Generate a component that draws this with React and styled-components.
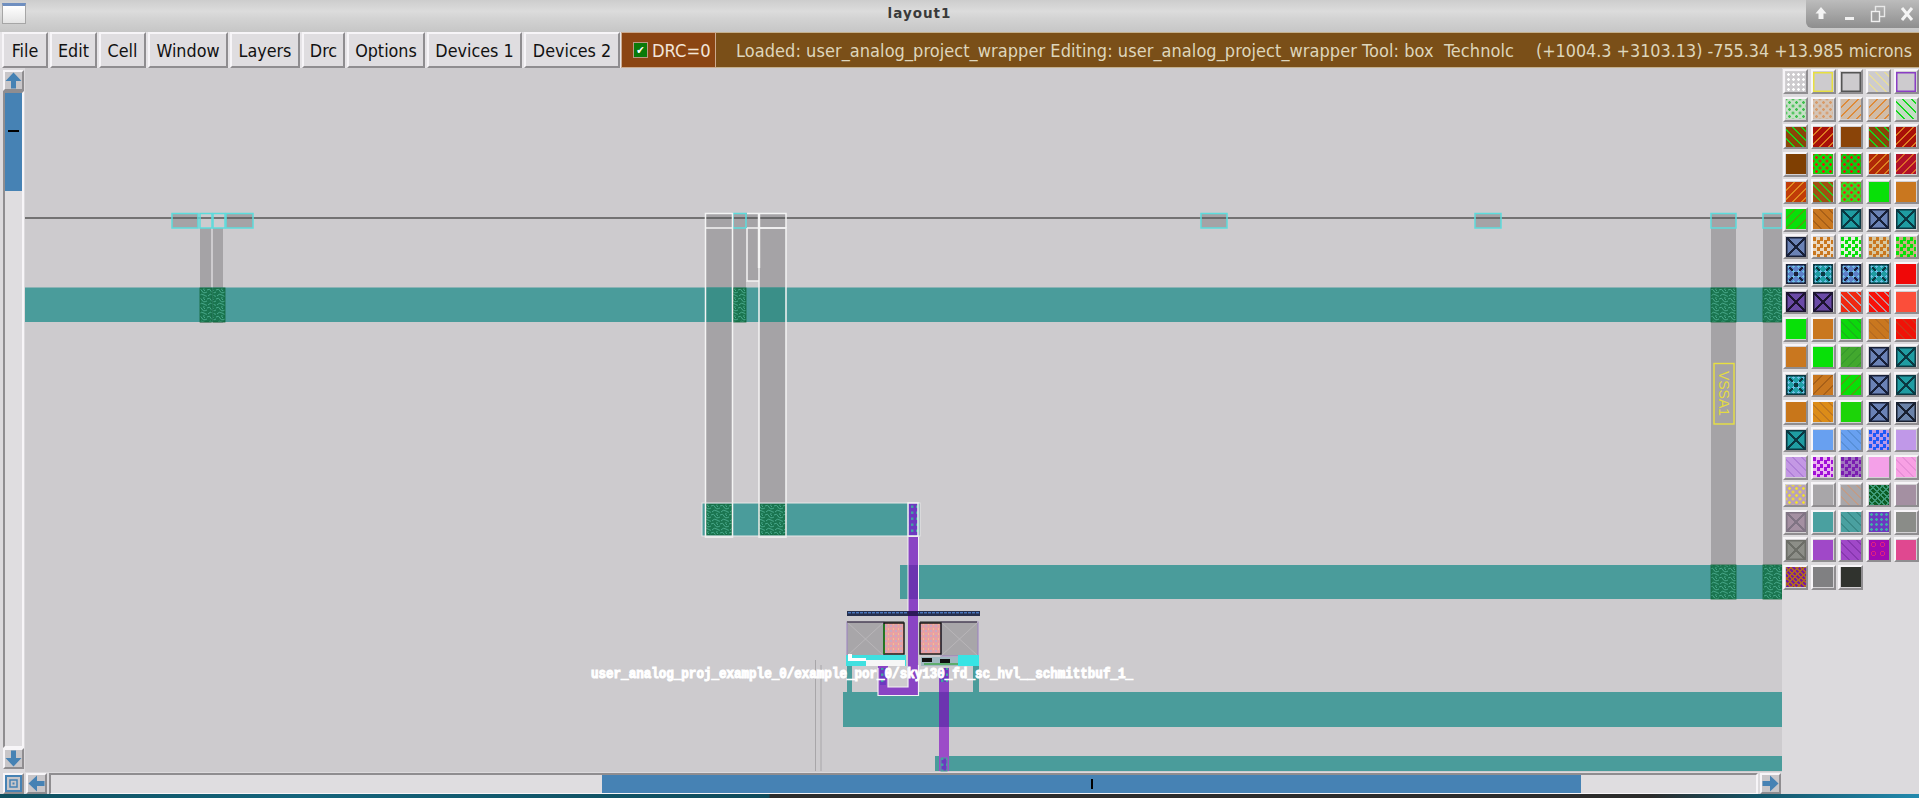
import React from "react";
import styled, { createGlobalStyle } from "styled-components";

const GlobalStyle = createGlobalStyle`
  html, body {
    margin: 0;
    padding: 0;
    background: #dcdadd;
    overflow: hidden;
  }
`;

const BLUE = "#4682b4";
const TEAL = "#4a9c9b";
const bevel = `
  border-style: solid;
  border-width: 2px;
  border-color: #f7f5f8 #8f8d90 #8f8d90 #f7f5f8;
  box-sizing: border-box;
`;

const Page = styled.div`
  display: flex;
  flex-direction: column;
  width: 1919px;
  height: 798px;
  overflow: hidden;
  background: #dcdadd;
  font-family: "DejaVu Sans", "Liberation Sans", sans-serif;
`;

/* window manager title */
const TitleBar = styled.div`
  position: relative;
  display: flex;
  align-items: flex-start;
  justify-content: center;
  flex: none;
  height: 32px;
  padding-right: 80px;
  background: linear-gradient(#cdcdcd, #dcdcdc 35%, #d2d2d2 60%, #c6c6c6);
`;

const TitleText = styled.span`
  margin-top: 5px;
  font-size: 13.5px;
  font-weight: bold;
  letter-spacing: 1px;
  color: #3a3a3a;
`;

const WindowIcon = styled.div`
  position: absolute;
  left: 2px;
  top: 3px;
  width: 24px;
  height: 21px;
  box-sizing: border-box;
  border: 1px solid #a6a6a6;
  border-top: 3px solid #6f8fc0;
  background: linear-gradient(#ffffff, #e4e4e4);
`;

const WindowControls = styled.div`
  position: absolute;
  right: 0;
  top: 0;
  display: flex;
  align-items: center;
  justify-content: flex-end;
  gap: 14px;
  width: 113px;
  height: 28px;
  padding-right: 5px;
  box-sizing: border-box;
  border-bottom-left-radius: 6px;
  background: linear-gradient(#bcbcbc, #8e8e8e);
`;

const Toolbar = styled.div`
  display: flex;
  flex: none;
  height: 36px;
  padding-left: 2px;
  gap: 2px;
  background: #e6e4e7;
`;

const MenuButton = styled.div`
  ${bevel}
  display: flex;
  align-items: center;
  justify-content: center;
  flex: none;
  width: ${(p) => p.$width}px;
  height: 36px;
  background: #dfdde0;
  color: #111;
  font-size: 17.8px;
  font-stretch: condensed;
  white-space: nowrap;
`;

const DrcBox = styled.div`
  display: flex;
  align-items: center;
  flex: none;
  gap: 4px;
  width: 95px;
  height: 36px;
  margin-left: -1px;
  padding-left: 11px;
  box-sizing: border-box;
  border: 1px solid #caa98e;
  background: #8b4513;
  color: #f2e6da;
  font-size: 18.2px;
  font-stretch: condensed;
`;

const DrcCheck = styled.span`
  display: flex;
  align-items: center;
  justify-content: center;
  width: 13px;
  height: 14px;
  border: 1px solid #b89a82;
  background: #0a7a0a;
  color: #fff;
  font-size: 11px;
  line-height: 1;
`;

const StatusBar = styled.div`
  display: flex;
  flex: 1;
  align-items: center;
  justify-content: space-between;
  height: 36px;
  margin-left: -2px;
  padding: 0 7px 0 20px;
  box-sizing: border-box;
  border-top: 1px solid #c4b08e;
  border-bottom: 1px solid #c4b08e;
  background: #7a4f18;
  color: #ded6bc;
  font-size: 18px;
  font-stretch: condensed;
  white-space: pre;
`;

const StatusMessage = styled.span`
  letter-spacing: 0.055px;
`;

const StatusCoords = styled.span`
  font-size: 17.8px;
`;

const Workspace = styled.div`
  display: grid;
  flex: none;
  grid-template-columns: 25px 1757px 137px;
  grid-template-rows: 704px 22px;
  height: 726px;
`;

const VerticalBar = styled.div`
  grid-column: 1;
  grid-row: 1;
  display: flex;
  flex-direction: column;
  padding: 2px 1px 3px 3px;
  box-sizing: border-box;
  background: #dcdadd;
`;

const ArrowButton = styled.div`
  ${bevel}
  display: flex;
  align-items: center;
  justify-content: center;
  flex: none;
  width: 21px;
  height: 21px;
  background: #c8c6c9;
`;

const VerticalTrough = styled.div`
  ${bevel}
  flex: 1;
  border-color: #8f8d90 #f7f5f8 #f7f5f8 #8f8d90;
  background: #dfdde0;
`;

const VerticalThumb = styled.div`
  display: flex;
  align-items: center;
  justify-content: center;
  height: 98px;
  padding-bottom: 22px;
  box-sizing: border-box;
  background: ${BLUE};
  &::after {
    content: "";
    width: 11px;
    height: 2px;
    background: #000;
  }
`;

const Canvas = styled.svg`
  grid-column: 2;
  grid-row: 1;
  display: block;
  width: 1757px;
  height: 704px;
  background: #cdcbce;
`;

const Palette = styled.div`
  grid-column: 3;
  grid-row: 1 / span 2;
  display: grid;
  grid-template-columns: repeat(5, 25px);
  grid-auto-rows: 25px;
  column-gap: 2.7px;
  row-gap: 2.55px;
  align-content: start;
  padding: 1px 0 0 1px;
  background: #dcdadd;
`;

const PaletteCell = styled.div`
  ${bevel}
  display: flex;
  align-items: center;
  justify-content: center;
  background: #d2d0d3;
`;

const stripes = (deg, ink, gap = 5) =>
  `repeating-linear-gradient(${deg}deg, transparent 0 ${gap}px, ${ink} ${gap}px ${gap + 1.4}px)`;

const overlayFor = (kind, ink) => {
  switch (kind) {
    case "back":
      return `background-image: ${stripes(45, ink)};`;
    case "slash":
      return `background-image: ${stripes(135, ink)};`;
    case "dense":
      return `background-image: ${stripes(45, ink, 2.2)}, ${stripes(135, ink, 3.2)};`;
    case "grid":
      return `
        background-image: linear-gradient(${ink}, ${ink});
        background-size: 2px 2px;
        background-image: radial-gradient(${ink} 1.2px, transparent 1.5px);
        background-size: 5px 5px;
      `;
    case "dots":
      return `
        background-image: linear-gradient(${ink}, ${ink}), linear-gradient(${ink}, ${ink});
        background-size: 2px 2px;
        background-repeat: no-repeat;
        background-image: radial-gradient(${ink} 1.2px, transparent 1.5px), radial-gradient(${ink} 1.2px, transparent 1.5px);
        background-size: 7px 7px;
        background-repeat: repeat;
        background-position: 0 0, 3.5px 3.5px;
      `;
    case "dashes":
      return `background-image: ${stripes(135, ink, 6)};`;
    case "brick":
      return `
        background-image: linear-gradient(${ink}, ${ink}), linear-gradient(${ink}, ${ink});
        background-size: 3px 3px;
        background-repeat: no-repeat;
        background-image:
          repeating-conic-gradient(${ink} 0 25%, transparent 0 50%);
        background-size: 7px 7px;
        background-repeat: repeat;
      `;
    case "rings":
      return `background-image: radial-gradient(transparent 1.5px, ${ink} 1.6px, ${ink} 2.6px, transparent 2.7px); background-size: 9px 9px;`;
    case "swirl":
      return `background-image: ${stripes(45, ink, 2.5)}, ${stripes(135, ink, 4)};`;
    case "cross":
    case "crossDots":
      return `
        box-shadow: inset 0 0 0 1.5px ${ink};
        background-image:
          ${kind === "crossDots" ? `radial-gradient(#6fc0e8 1px, transparent 1.3px),` : ""}
          linear-gradient(45deg, transparent calc(50% - 1px), ${ink} calc(50% - 1px), ${ink} calc(50% + 1px), transparent calc(50% + 1px)),
          linear-gradient(135deg, transparent calc(50% - 1px), ${ink} calc(50% - 1px), ${ink} calc(50% + 1px), transparent calc(50% + 1px));
        ${kind === "crossDots" ? "background-size: 5px 5px, 100% 100%, 100% 100%;" : ""}
      `;
    case "outline":
      return `box-shadow: inset 0 0 0 1.5px ${ink};`;
    default:
      return "";
  }
};

const Swatch = styled.div`
  width: 20px;
  height: 20px;
  background-color: ${(p) => p.$fill};
  ${(p) => overlayFor(p.$kind, p.$ink)}
`;

const HorizontalBar = styled.div`
  grid-column: 1 / span 2;
  grid-row: 2;
  display: flex;
  align-items: center;
  gap: 2px;
  padding: 1px 1px 0 3px;
  box-sizing: border-box;
  background: #dcdadd;
`;

const HorizontalTrough = styled.div`
  ${bevel}
  display: flex;
  flex: 1;
  height: 22px;
  padding-left: 551px;
  border-color: #8f8d90 #f7f5f8 #f7f5f8 #8f8d90;
  background: #dfdde0;
`;

const HorizontalThumb = styled.div`
  display: flex;
  align-items: center;
  justify-content: center;
  width: 979px;
  background: ${BLUE};
  &::after {
    content: "";
    width: 2px;
    height: 10px;
    background: #000;
  }
`;

const DesktopStrip = styled.div`
  flex: 1;
  background: linear-gradient(
    90deg,
    #0f5060 0,
    #14647c 300px,
    #0f4a5a 769px,
    #2b2b2b 770px,
    #2b2b2b 1650px,
    #14566a 1760px,
    #2289ad 1919px
  );
`;

const Arrow = ({ turn }) => (
  <svg width="17" height="17" viewBox="0 0 17 17" transform={`rotate(${turn})`}>
    <path d="M8.5 0.5 L16.5 9 L11 9 L11 16.5 L6 16.5 L6 9 L0.5 9 Z" fill={BLUE} />
  </svg>
);

const CornerIcon = () => (
  <svg width="17" height="17" viewBox="0 0 17 17">
    <rect x="1" y="1" width="15" height="15" fill="none" stroke={BLUE} strokeWidth="2" />
    <rect x="5" y="5" width="7" height="7" fill="none" stroke={BLUE} strokeWidth="1.5" />
    <rect x="7.5" y="7.5" width="2" height="2" fill={BLUE} />
  </svg>
);

const ControlIcons = () => (
  <>
    <svg width="14" height="16" viewBox="0 0 14 16">
      <path d="M7 1 L12.5 7.5 L9.5 7.5 L9.5 13 L4.5 13 L4.5 7.5 L1.5 7.5 Z" fill="#f4f4f4" />
    </svg>
    <svg width="14" height="16" viewBox="0 0 14 16">
      <rect x="3" y="11" width="9" height="3" fill="#f0f0f0" />
    </svg>
    <svg width="16" height="18" viewBox="0 0 16 18">
      <rect x="5.5" y="1.5" width="9" height="10" fill="none" stroke="#e8e8e8" strokeWidth="1.4" />
      <rect x="1.5" y="6.5" width="8" height="10" fill="#a0a0a0" stroke="#f0f0f0" strokeWidth="1.4" />
    </svg>
    <svg width="14" height="16" viewBox="0 0 14 16">
      <path d="M2 2 L12 14 M12 2 L2 14" stroke="#f4f4f4" strokeWidth="3" />
    </svg>
  </>
);

const menus = [
  ["File", 46],
  ["Edit", 47],
  ["Cell", 47],
  ["Window", 80],
  ["Layers", 70],
  ["Drc", 43],
  ["Options", 78],
  ["Devices 1", 95],
  ["Devices 2", 96],
];

const BG = "#cdcbce";
const BLUEX = "#6a82b6";
const TEALX = "#1f9ca2";
const ORANGE = "#c9771f";
const GREEN = "#08e008";
const NAVY = "#182038";
const DARKTEAL = "#0b3842";

const swatches = [
  [[BG, "grid", "#ffffff"], [BG, "outline", "#e8e040"], [BG, "outline", "#555"], [BG, "back", "#e6dc9c"], [BG, "outline", "#8a3ec4"]],
  [["#c6e0c6", "dots", "#3fc04f"], ["#d4c4b6", "dots", "#d89a68"], ["#d0bca8", "slash", "#de8a38"], ["#d0bca8", "slash", "#de8a38"], ["#c4dcc4", "back", "#12d81c"]],
  [["#8a4408", "back", "#1ad41a"], ["#a81008", "slash", "#dc7a20"], ["#8a4408", "solid"], ["#8a4408", "back", "#1ad41a"], ["#a81008", "slash", "#dc7a20"]],
  [["#7f3f02", "solid"], ["#10d810", "dots", "#f01010"], ["#10c810", "dots", "#e81010"], ["#b02808", "slash", "#dc8020"], ["#b01028", "slash", "#dc6a28"]],
  [["#c03c08", "slash", "#e08a20"], ["#a05010", "back", "#30c820"], ["#38d820", "dots", "#e82818"], [GREEN, "solid"], [ORANGE, "solid"]],
  [[GREEN, "dashes", "#50a010"], [ORANGE, "back", "#a86018"], [TEALX, "cross", DARKTEAL], [BLUEX, "cross", NAVY], [TEALX, "cross", DARKTEAL]],
  [[BLUEX, "cross", NAVY], [ORANGE, "brick", "#ead8c0"], [GREEN, "brick", "#e8f0e0"], [ORANGE, "brick", "#d8c8a0"], [GREEN, "brick", "#c8b080"]],
  [["#5c80c8", "crossDots", NAVY], [TEALX, "crossDots", DARKTEAL], ["#5c80c8", "crossDots", NAVY], [TEALX, "crossDots", DARKTEAL], ["#f00808", "solid"]],
  [["#6a4aa6", "cross", "#1c1430"], ["#6a4aa6", "cross", "#1c1430"], ["#f02810", "back", "#b8a8b0"], ["#f81008", "back", "#c09098"], ["#fb4e3a", "solid"]],
  [[GREEN, "solid"], [ORANGE, "solid"], ["#0cd80c", "back", "#18b818"], [ORANGE, "back", "#b86c20"], ["#f01208", "back", "#d03018"]],
  [[ORANGE, "solid"], [GREEN, "solid"], ["#42a82e", "slash", "#389c2c"], [BLUEX, "cross", NAVY], [TEALX, "cross", DARKTEAL]],
  [["#20a0a8", "crossDots", DARKTEAL], [ORANGE, "dashes", "#a86018"], [GREEN, "dashes", "#50a010"], [BLUEX, "cross", NAVY], [TEALX, "cross", DARKTEAL]],
  [["#c8761a", "solid"], ["#dc8c18", "back", "#c07820"], ["#1cd408", "solid"], [BLUEX, "cross", NAVY], ["#6a82a8", "cross", "#182030"]],
  [[TEALX, "cross", DARKTEAL], ["#68a0f0", "solid"], ["#68a0f0", "back", "#5890d8"], ["#1c58f8", "brick", "#b898e8"], ["#c098e8", "solid"]],
  [["#c498e4", "back", "#b080d8"], ["#a010d8", "brick", "#ecb4f0"], ["#7a1cb0", "brick", "#a070c0"], ["#f4a0e8", "solid"], ["#f8a0e4", "back", "#e890d8"]],
  [["#b8a0bc", "dots", "#f0e030"], ["#a8a6a9", "solid"], ["#a8a6a9", "back", "#c09c88"], ["#0c5c24", "swirl", "#3e9a78"], ["#a490a2", "solid"]],
  [["#a490a2", "cross", "#807484"], ["#4aa0a0", "solid"], ["#4aa0a0", "back", "#3a8a88"], ["#6c38c0", "grid", "#40b0a8"], ["#8a8c88", "solid"]],
  [["#8c8e88", "cross", "#6c6e68"], ["#a048c8", "solid"], ["#a048c8", "back", "#8838b0"], ["#a008b0", "rings", "#e02080"], ["#e04890", "solid"]],
  [["#7a1c98", "dense", "#b06820"], ["#808082", "solid"], ["#30332e", "solid"]],
];

/* rectangles of the mask layout, in page coordinates */
const Box = ({ x, y, x2, y2, fill = "none", stroke, sw = 1.5 }) => (
  <rect x={x} y={y} width={x2 - x} height={y2 - y} fill={fill} stroke={stroke} strokeWidth={stroke ? sw : 0} />
);

const cyanTabs = [
  [172, 198], [200, 212], [213, 225], [226, 253], [733, 746], [1201, 1227], [1475, 1501], [1711, 1736], [1763, 1782],
];
const GREY = "#a5a3a6";
const OVERLAP = "#3a8f88";
const WHITE = "#f4f4f4";
const CYAN = "#5cdcdc";
const viaSpots = [
  [200, 212, 288, 322], [213, 225, 288, 322], [733, 746, 288, 322], [706, 732, 504, 535], [759, 786, 504, 535],
  [1711, 1736, 288, 322], [1763, 1782, 288, 322], [1711, 1736, 565, 599], [1763, 1782, 565, 599],
];

const LayoutDrawing = () => (
  <Canvas viewBox="25 68 1757 704">
    <defs>
      <pattern id="via" width="9" height="9" patternUnits="userSpaceOnUse">
        <rect width="9" height="9" fill="#1a7550" />
        <path d="M0 2 Q3 0 4 3 T9 4 M1 8 Q3 5 6 7 T9 8 M6 0 Q5 2 7 3" fill="none" stroke="#48a88a" strokeWidth="1" />
      </pattern>
      <pattern id="pvia" width="5" height="6" patternUnits="userSpaceOnUse">
        <rect width="5" height="6" fill="#6c38c0" />
        <rect x="1" y="1.5" width="2.4" height="2.4" fill="#40a8a0" />
      </pattern>
      <pattern id="pink" width="5" height="5" patternUnits="userSpaceOnUse">
        <rect width="5" height="5" fill="#e8a0a4" />
        <rect x="0" y="0" width="2" height="2" fill="#c8a8c0" />
        <rect x="3" y="3" width="1" height="2" fill="#f0c090" />
      </pattern>
      <pattern id="busbar" width="4" height="5" patternUnits="userSpaceOnUse">
        <rect width="4" height="5" fill="#26304e" />
        <rect x="0" y="2" width="3" height="1.4" fill="#4a78c0" />
      </pattern>
    </defs>

    {/* grey straps */}
    <Box x={200} y={228} x2={211} y2={323} fill={GREY} />
    <Box x={213} y={228} x2={223} y2={323} fill={GREY} />
    <Box x={706} y={213} x2={732} y2={503} fill={GREY} />
    <Box x={733} y={213} x2={746} y2={288} fill={GREY} />
    <Box x={746} y={213} x2={759} y2={281} fill={GREY} />
    <Box x={759} y={213} x2={786} y2={503} fill={GREY} />
    <Box x={1711} y={213} x2={1736} y2={565} fill={GREY} />
    <Box x={1763} y={213} x2={1782} y2={565} fill={GREY} />
    {[[172, 198], [226, 253], [1201, 1227], [1475, 1501]].map(([a, b]) => (
      <Box key={a} x={a} y={213} x2={b} y2={228} fill={GREY} />
    ))}

    {/* diffusion bands */}
    <Box x={25} y={287.5} x2={1782} y2={322} fill={TEAL} />
    <Box x={702} y={503} x2={920} y2={536} fill={TEAL} />
    <Box x={900} y={565} x2={1782} y2={599} fill={TEAL} />
    <Box x={843} y={692} x2={1782} y2={727} fill={TEAL} />
    <Box x={935} y={756} x2={1782} y2={771} fill={TEAL} />
    <Box x={847} y={665} x2={852} y2={692} fill={TEAL} />
    <Box x={973} y={665} x2={979} y2={692} fill={TEAL} />
    <Box x={706} y={287.5} x2={732} y2={322} fill={OVERLAP} />
    <Box x={759} y={287.5} x2={786} y2={322} fill={OVERLAP} />

    <line x1="25" y1="218" x2="1782" y2="218" stroke="#555" strokeWidth="1.4" />
    <line x1="815.5" y1="660" x2="815.5" y2="771" stroke="#a8a6a9" strokeWidth="1" />
    <line x1="821" y1="665" x2="821" y2="771" stroke="#a8a6a9" strokeWidth="1" />

    {viaSpots.map(([a, b, c, d]) => (
      <Box key={`${a}-${c}`} x={a} y={c} x2={b} y2={d} fill="url(#via)" stroke="#12663a" sw={0.8} />
    ))}

    {/* tabs along the top rail */}
    {cyanTabs.map(([a, b]) => (
      <Box key={a} x={a} y={213.5} x2={b} y2={228} stroke={CYAN} />
    ))}

    {/* white selection outlines */}
    <Box x={705.5} y={213.5} x2={732.5} y2={537} stroke={WHITE} />
    <Box x={759} y={228} x2={786} y2={537} stroke={WHITE} />
    <path d="M747 213.5 H786 V228 M747 228 V281 H759 M705 228 H733 M747 228 H786" fill="none" stroke={WHITE} strokeWidth="1.5" />
    <line x1="759" y1="213.5" x2="759" y2="268" stroke={WHITE} strokeWidth="2.4" />
    <Box x={702} y={503} x2={920} y2={536} stroke="#e8e8e8" sw={1} />

    {/* purple riser from the strap to the cell */}
    <Box x={908} y={537} x2={918} y2={565} fill="#8a44c4" />
    <Box x={908} y={565} x2={918} y2={599} fill="#6c34b0" />
    <Box x={908} y={599} x2={918} y2={695} fill="#8a44c4" />
    <Box x={908} y={503} x2={918} y2={536} fill="url(#pvia)" stroke={WHITE} />
    <line x1="908" y1="537" x2="908" y2="612" stroke={WHITE} strokeWidth="1" />
    <line x1="918.5" y1="537" x2="918.5" y2="612" stroke={WHITE} strokeWidth="1" />

    {/* standard cell */}
    <Box x={847} y={611} x2={980} y2={616} fill="url(#busbar)" />
    <Box x={908} y={611} x2={918} y2={616} fill="#2c1858" />
    <Box x={847} y={622} x2={884} y2={656} fill="#a8a6a9" stroke="#9a80c0" sw={1} />
    <path d="M847 622 L884 656 M884 622 L847 656" stroke="#bcbabd" strokeWidth="0.8" />
    <Box x={941} y={622} x2={978} y2={656} fill="#a8a6a9" stroke="#9a80c0" sw={1} />
    <path d="M941 622 L978 656 M978 622 L941 656" stroke="#bcbabd" strokeWidth="0.8" />
    <line x1="847" y1="622" x2="904" y2="622" stroke="#222" strokeWidth="1.2" />
    <line x1="920" y1="622" x2="977" y2="622" stroke="#222" strokeWidth="1.2" />
    <Box x={884} y={623} x2={904} y2={654} fill="url(#pink)" stroke="#111" sw={1.4} />
    <Box x={920} y={623} x2={941} y2={654} fill="url(#pink)" stroke="#111" sw={1.4} />
    <line x1="884" y1="624" x2="884" y2="654" stroke="#10a010" strokeWidth="1.2" />

    <Box x={846} y={655} x2={906} y2={666} fill="#40e0e0" />
    <Box x={921} y={657} x2={979} y2={666} fill="#a0b8c0" />
    <Box x={958} y={655} x2={979} y2={666} fill="#38e4e4" />
    <Box x={848} y={654} x2={852} y2={661} fill="#fff" />
    <Box x={850} y={658} x2={866} y2={661} fill="#fff" />
    <Box x={866} y={660} x2={905} y2={666} fill="#f6f6f6" />
    <Box x={922} y={658} x2={932} y2={662} fill="#111" />
    <Box x={940} y={659} x2={950} y2={663} fill="#111" />
    <line x1="924" y1="664" x2="958" y2="664" stroke="#18a018" strokeWidth="1.2" />

    {/* hook at the cell's output */}
    <Box x={878} y={666} x2={888} y2={695} fill="#8a44c4" />
    <Box x={878} y={687} x2={918} y2={695} fill="#8a44c4" />
    <Box x={880} y={668} x2={886} y2={685} fill="url(#pvia)" />
    <path d="M878 668 V695.5 H918.5 V665 M888 668 V687 H908 V668" fill="none" stroke={WHITE} strokeWidth="1.2" />

    {/* long riser to the lower band */}
    <Box x={939} y={668} x2={949} y2={692} fill="#8a44c4" />
    <Box x={939} y={692} x2={949} y2={727} fill="#6c34b0" />
    <Box x={939} y={727} x2={949} y2={771} fill="#9c4cc8" />
    <Box x={940} y={668} x2={948} y2={682} fill="url(#pvia)" />
    <Box x={941} y={758} x2={947} y2={771} fill="url(#pvia)" stroke={TEAL} sw={1} />

    <Box x={1714} y={363.5} x2={1734} y2={424} stroke="#e8e040" sw={1.4} />
    <text
      transform="translate(1719 393.5) rotate(90)"
      textAnchor="middle"
      fontFamily="'Liberation Sans', sans-serif"
      fontSize="14"
      fill="#e4dc40"
    >
      VSSA1
    </text>

    <text
      x="591"
      y="677.5"
      textLength="542"
      lengthAdjust="spacingAndGlyphs"
      fontFamily="'Liberation Mono', monospace"
      fontSize="14"
      fontWeight="bold"
      fill="#ffffff"
      stroke="#ffffff"
      strokeWidth="1"
    >
      user_analog_proj_example_0/example_por_0/sky130_fd_sc_hvl__schmittbuf_1_
    </text>
  </Canvas>
);

const App = () => (
  <Page>
    <GlobalStyle />
    <TitleBar>
      <WindowIcon />
      <TitleText>layout1</TitleText>
      <WindowControls>
        <ControlIcons />
      </WindowControls>
    </TitleBar>
    <Toolbar>
      {menus.map(([label, width]) => (
        <MenuButton key={label} $width={width}>
          {label}
        </MenuButton>
      ))}
      <DrcBox>
        <DrcCheck>✔</DrcCheck>
        DRC=0
      </DrcBox>
      <StatusBar>
        <StatusMessage>Loaded: user_analog_project_wrapper Editing: user_analog_project_wrapper Tool: box  Technolc</StatusMessage>
        <StatusCoords>(+1004.3 +3103.13) -755.34 +13.985 microns</StatusCoords>
      </StatusBar>
    </Toolbar>
    <Workspace>
      <VerticalBar>
        <ArrowButton>
          <Arrow turn={0} />
        </ArrowButton>
        <VerticalTrough>
          <VerticalThumb />
        </VerticalTrough>
        <ArrowButton>
          <Arrow turn={180} />
        </ArrowButton>
      </VerticalBar>
      <LayoutDrawing />
      <Palette>
        {swatches.flat().map(([fill, kind, ink], i) => (
          <PaletteCell key={i}>
            <Swatch $fill={fill} $kind={kind} $ink={ink} />
          </PaletteCell>
        ))}
      </Palette>
      <HorizontalBar>
        <ArrowButton>
          <CornerIcon />
        </ArrowButton>
        <ArrowButton>
          <Arrow turn={270} />
        </ArrowButton>
        <HorizontalTrough>
          <HorizontalThumb />
        </HorizontalTrough>
        <ArrowButton>
          <Arrow turn={90} />
        </ArrowButton>
      </HorizontalBar>
    </Workspace>
    <DesktopStrip />
  </Page>
);

export default App;
